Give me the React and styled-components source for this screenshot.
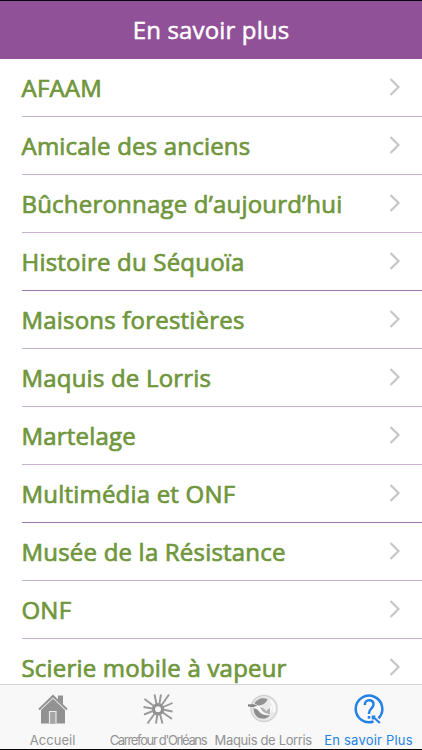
import React from 'react';
import styled, { createGlobalStyle } from 'styled-components';

const GlobalStyle = createGlobalStyle`
  * {
    box-sizing: border-box;
  }

  body {
    margin: 0;
    background: #fff;
  }
`;

const Screen = styled.div`
  display: flex;
  flex-direction: column;
  width: 422px;
  height: 750px;
  overflow: hidden;
  border-top: 1px solid #08000c;
  border-bottom: 1px solid #000;
  background: #fff;
  font-family: 'Open Sans', 'Noto Sans', sans-serif;
`;

const Header = styled.header`
  flex: none;
  display: flex;
  align-items: center;
  justify-content: center;
  height: 58px;
  background: #915198;
`;

const Title = styled.h1`
  margin: 0;
  color: #fff;
  font-size: 24px;
  font-weight: 400;
  line-height: 32px;
  letter-spacing: 0.15px;
  -webkit-text-stroke: 0.5px #fff;
`;

const List = styled.ul`
  flex: 1;
  min-height: 0;
  margin: 0;
  padding: 0 0 0 21.5px;
  overflow: hidden;
  list-style: none;
`;

const Row = styled.li`
  display: flex;
  align-items: center;
  justify-content: space-between;
  height: 58px;
  padding-right: 21px;
  border-bottom: 1px solid ${(props) => (props.$dark ? '#a377ad' : '#ccb0d2')};
`;

const Label = styled.span`
  color: #70963c;
  font-size: 24px;
  font-weight: 400;
  line-height: 32px;
  white-space: nowrap;
  letter-spacing: 0.2px;
  -webkit-text-stroke: 0.7px #70963c;
`;

const Chevron = styled.svg`
  flex: none;
  width: 12px;
  height: 18px;
  margin-bottom: 2px;
  fill: none;
  stroke: #c5c5ca;
  stroke-width: 2.2;
`;

const TabBar = styled.nav`
  flex: none;
  display: grid;
  grid-template-columns: repeat(4, 105.3px);
  height: 65px;
  border-top: 1px solid #d5d5d6;
  background: #f8f8f8;
`;

const Tab = styled.div`
  display: flex;
  flex-direction: column;
  align-items: center;
  padding-top: 9px;
  color: ${(props) => (props.$active ? '#2482e6' : '#929292')};
`;

const TabIcon = styled.svg`
  display: block;
  width: 30px;
  height: 30px;
`;

const TabLabel = styled.span`
  margin-top: 8px;
  font-family: Inter, 'Liberation Sans', sans-serif;
  font-size: 13px;
  line-height: 16px;
  white-space: nowrap;
  letter-spacing: ${(props) => props.$spacing || 0}px;
`;

const items = [
  { name: 'AFAAM' },
  { name: 'Amicale des anciens' },
  { name: 'Bûcheronnage d’aujourd’hui' },
  { name: 'Histoire du Séquoïa', dark: true },
  { name: 'Maisons forestières' },
  { name: 'Maquis de Lorris' },
  { name: 'Martelage' },
  { name: 'Multimédia et ONF', dark: true },
  { name: 'Musée de la Résistance' },
  { name: 'ONF' },
  { name: 'Scierie mobile à vapeur' },
];

const HouseIcon = () => (
  <TabIcon viewBox="0 0 30 30">
    <path d="M3 16 15 4.5 27 16v13.5H3z" fill="#929292" />
    <path d="M20 1.500h5v9l-5-5z" fill="#929292" />
    <path d="M1 15.5 15 2l14 13.5" fill="none" stroke="#929292" strokeWidth="2" />
    <path d="M3 15.800 15 4.300l12 11.500" fill="none" stroke="#dcdcdc" strokeWidth="0.8" />
    <path d="M11.500 29.500V17.500h6.500v12" fill="#a6a6a6" stroke="#eee" strokeWidth="1.1" />
  </TabIcon>
);

const StarIcon = () => (
  <TabIcon viewBox="0 0 30 30" fill="none" stroke="#999" strokeWidth="1.9">
    <circle cx="15" cy="15.3" r="4.6" stroke="#8c8c8c" strokeWidth="3.2" />
    <path d="M13.8 11 11.5 .5M16.2 11 18 .5M18 12 26 .5M19 13.500 29.500 9M19.500 15.500 29.500 17.500M18.700 17.700 29 25M16.800 19.300 19.500 29.500M14.500 19.500 13 29.500M12.400 18.500 4.500 29.500M11 16.700 1 20.500M10.700 14.800.5 13M11.600 12.600 1.500 5" />
  </TabIcon>
);

const MaquisIcon = () => (
  <TabIcon viewBox="0 0 30 30">
    <circle cx="16" cy="14.500" r="13" fill="#e9e9e9" stroke="#d2d2d2" strokeWidth="1.500" />
    <path d="M6.500 9.500c2-4.500 8-6.500 13-4.500-1 3.500-4 6-9 6.500z" fill="#929292" />
    <path d="M0 10.200h6l3 1.300-1 2-8-1z" fill="#868686" />
    <path d="M5.500 13c3-1.500 7-1.500 9.500.5l3 2.500 6-5-1 7.500-4 2c-4 0-6-1.500-8-4z" fill="#fafafa" />
    <path d="M5.500 14.500c2.500 0 4 1 5.500 3 2.500 3 6 4 11 4-2 2.500-5 3.500-8.500 3-4.500-.5-8-4.500-8-10z" fill="#8e8e8e" />
    <path d="M12 13c3 .5 5 2 6 4l4-3.500V20c-4 0-8-2-10-7z" fill="#b0b0b0" />
    <path d="M22.500 6.500c3 2.500 4.500 7 3 11.500" fill="none" stroke="#fafafa" strokeWidth="2.500" />
  </TabIcon>
);

const QuestionIcon = () => (
  <TabIcon viewBox="0 0 30 30" fill="none" stroke="#2482e6" strokeWidth="2.500">
    <path d="M24.500 24.300A13.300 13.300 0 1 0 19.500 27.500" />
    <path d="M10.800 11C10.800 8 12.500 6.300 15 6.300c2.700 0 4.500 1.600 4.500 4.200 0 3.800-4.500 4.500-4.500 8.500v1" />
    <path d="M15 22v2.700" />
    <path d="M18.800 22.500l7 6.500M18.800 25.500v-3h2.500" strokeWidth="2.200" />
  </TabIcon>
);

const tabs = [
  { name: 'Accueil', icon: HouseIcon, spacing: 0.05 },
  { name: "Carrefour d'Orléans", icon: StarIcon, spacing: -1.35 },
  { name: 'Maquis de Lorris', icon: MaquisIcon, spacing: -0.35 },
  { name: 'En savoir Plus', icon: QuestionIcon, spacing: 0.2, active: true },
];

const App = () => {
  return (
    <>
      <GlobalStyle />
      <Screen>
        <Header>
          <Title>En savoir plus</Title>
        </Header>
        <List>
          {items.map((item) => (
            <Row key={item.name} $dark={item.dark}>
              <Label>{item.name}</Label>
              <Chevron viewBox="0 0 12 18">
                <path d="m1.500 1 8 8-8 8" />
              </Chevron>
            </Row>
          ))}
        </List>
        <TabBar>
          {tabs.map(({ name, icon: Icon, spacing, active }) => (
            <Tab key={name} $active={active}>
              <Icon />
              <TabLabel $spacing={spacing}>{name}</TabLabel>
            </Tab>
          ))}
        </TabBar>
      </Screen>
    </>
  );
};

export default App;
